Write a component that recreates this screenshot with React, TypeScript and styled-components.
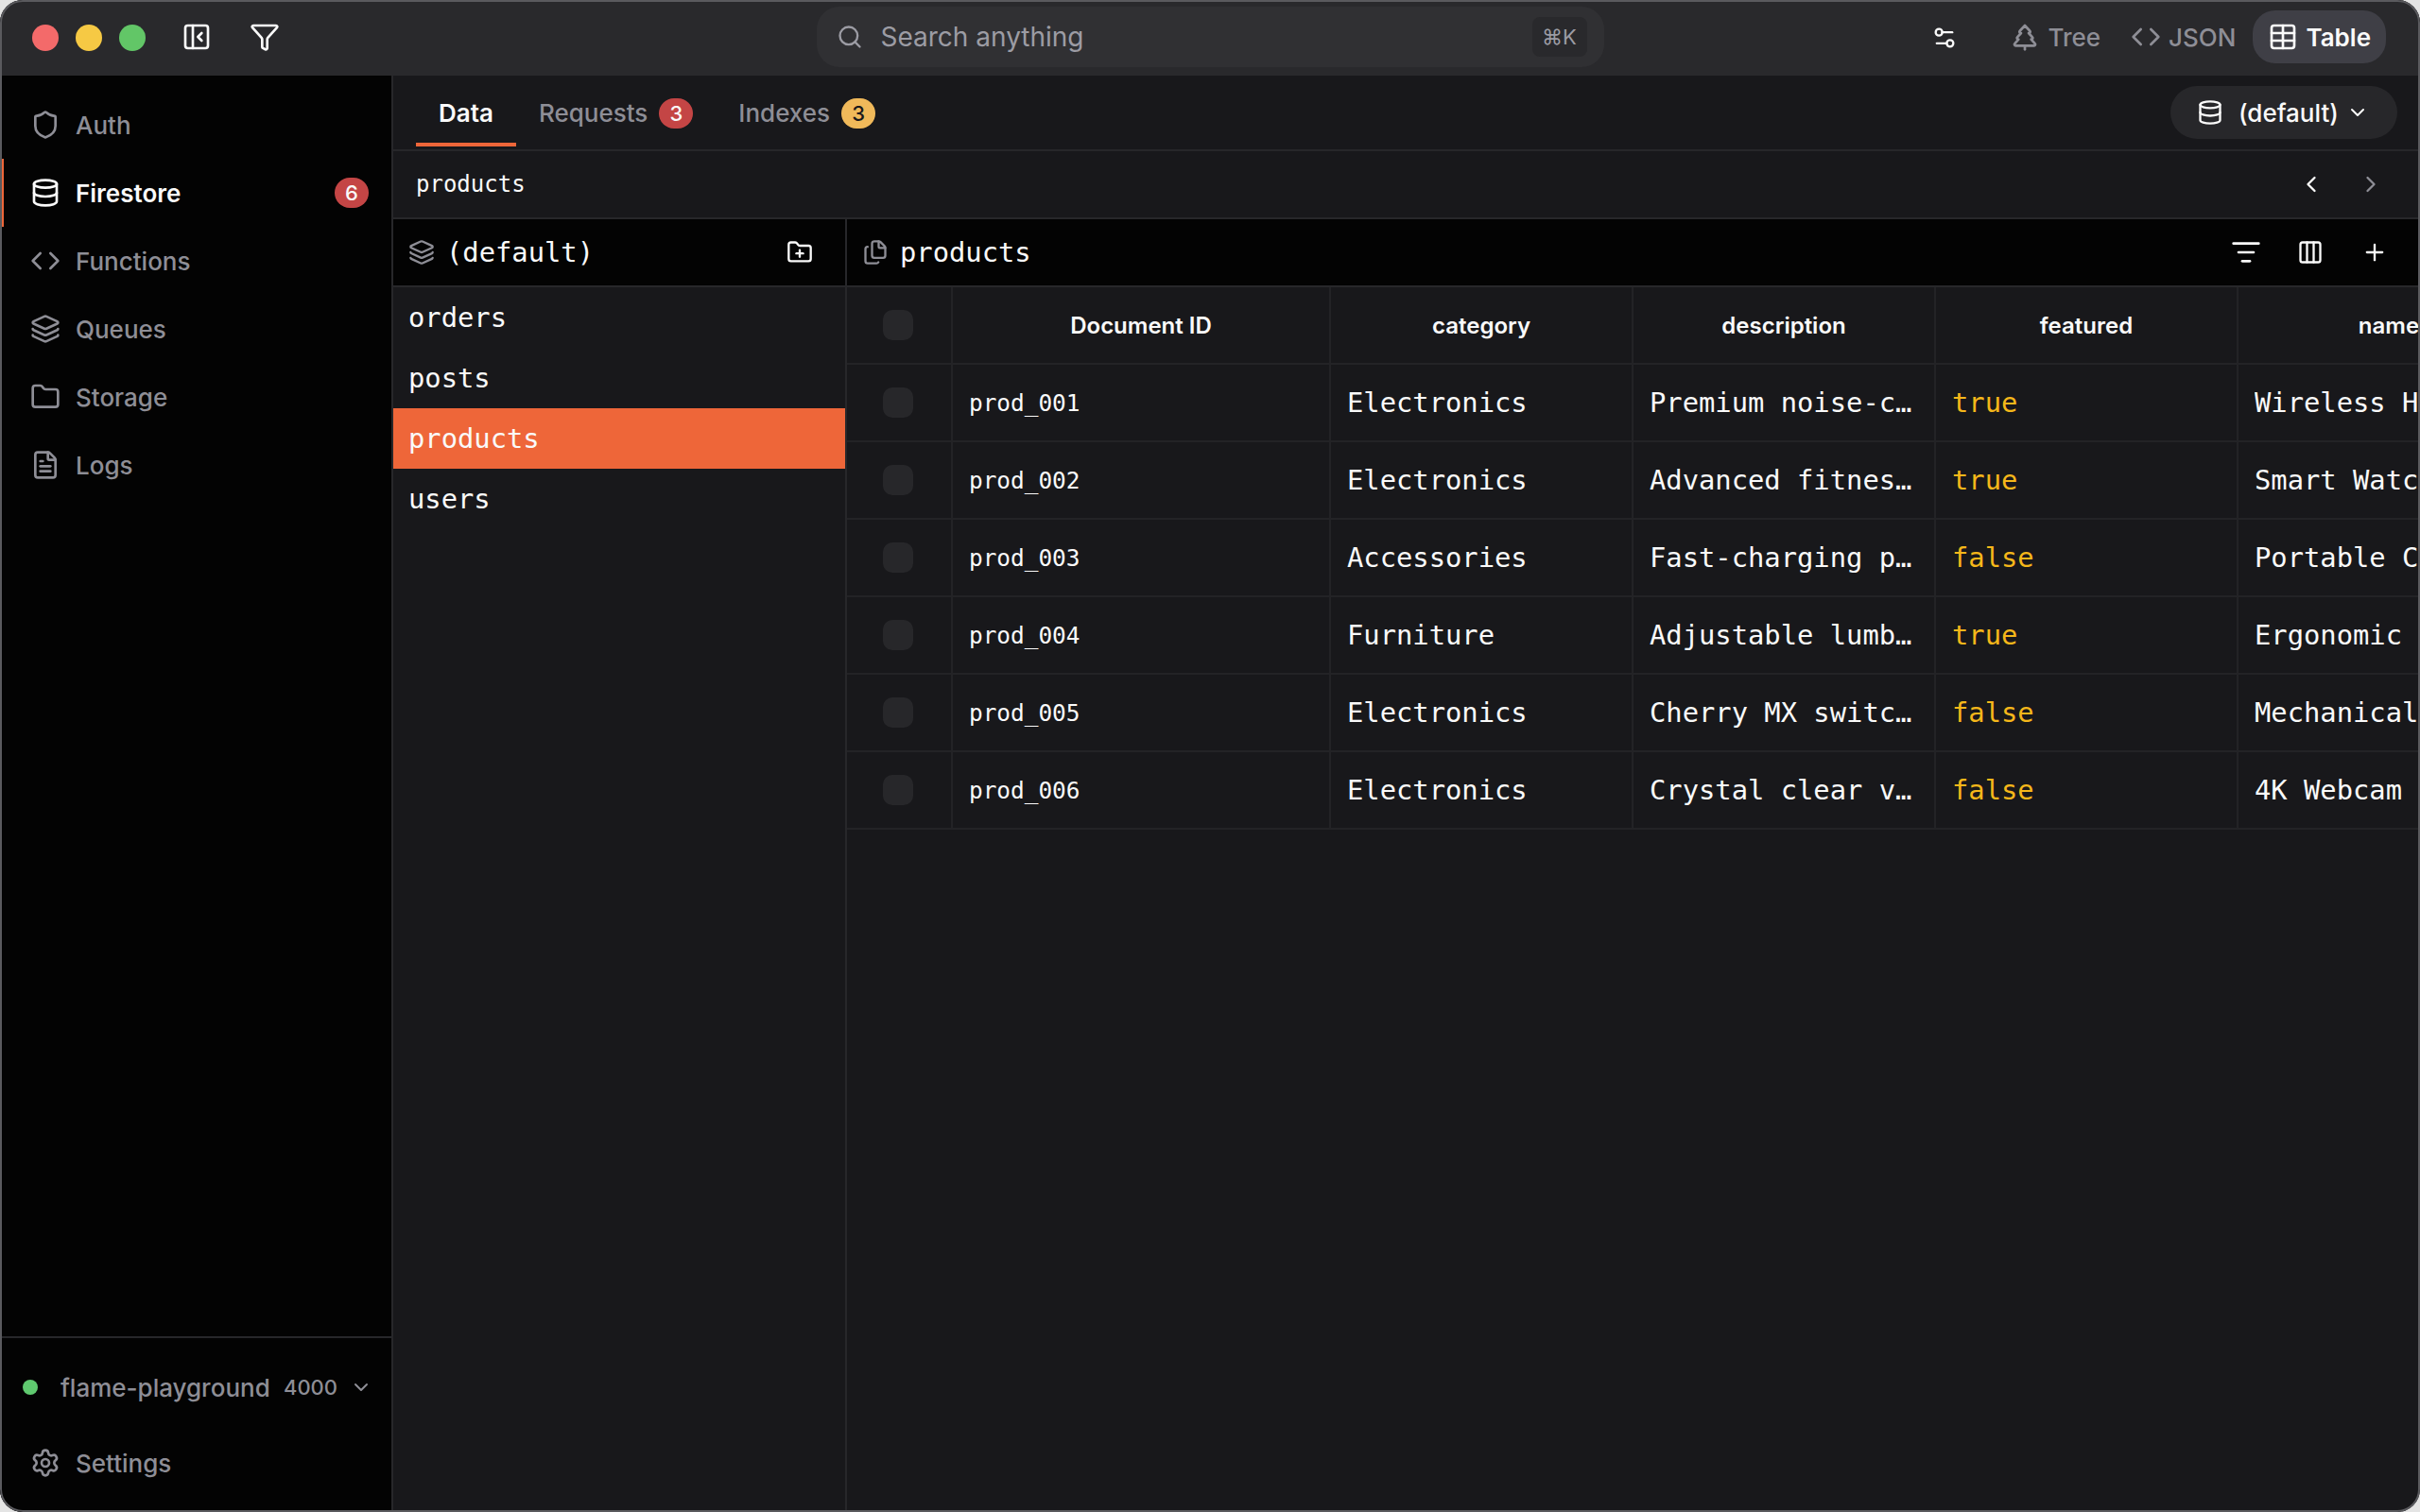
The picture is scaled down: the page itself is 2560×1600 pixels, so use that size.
import styled, { createGlobalStyle } from "styled-components";
import {
  ChevronDown,
  ChevronLeft,
  ChevronRight,
  Code,
  Columns3,
  Database,
  FileText,
  Files,
  Folder,
  FolderPlus,
  Funnel,
  Layers,
  ListFilter,
  PanelLeftClose,
  Plus,
  Search,
  Settings,
  Settings2,
  Shield,
  Table,
  TreePine,
} from "lucide-react";

const SANS = `Inter, "Liberation Sans", sans-serif`;
const MONO = `"DejaVu Sans Mono", "Liberation Mono", monospace`;
const ACCENT = "#ee6639";
const LINE = "#27272a";

const GlobalStyle = createGlobalStyle`
  html, body {
    margin: 0;
    padding: 0;
    background: #e4e4e4;
  }
  * {
    box-sizing: border-box;
  }
  svg {
    flex-shrink: 0;
    display: block;
  }
`;

const Window = styled.div`
  width: 2560px;
  height: 1600px;
  display: flex;
  flex-direction: column;
  overflow: hidden;
  border-radius: 24px;
  background: #18181b;
  font-family: ${SANS};
  color: #fafafa;
  position: relative;

  &::after {
    content: "";
    position: absolute;
    inset: 0;
    border: 2px solid #5a5a5e;
    border-radius: 24px;
    pointer-events: none;
  }
`;

const TitleBar = styled.header`
  height: 80px;
  flex-shrink: 0;
  display: grid;
  grid-template-columns: 1fr 833px 1fr;
  align-items: center;
  background: #29292c;
`;

const TitleLeft = styled.div`
  display: flex;
  align-items: center;
  padding-left: 34px;
  color: #fafafa;
`;

const Light = styled.span<{ $color: string }>`
  width: 28px;
  height: 28px;
  border-radius: 50%;
  margin-right: 18px;
  background: ${(p) => p.$color};
`;

const TitleIcons = styled.div`
  display: flex;
  gap: 40px;
  margin-left: 20px;
  margin-top: -2px;
`;

const SearchBox = styled.div`
  height: 64px;
  margin-top: -2px;
  display: flex;
  align-items: center;
  gap: 19px;
  padding: 0 18px 0 21px;
  border-radius: 24px;
  background: #303033;
  color: #9c9ca4;
`;

const SearchText = styled.span`
  flex: 1;
  font-size: 28px;
`;

const Kbd = styled.kbd`
  width: 58px;
  height: 42px;
  display: flex;
  align-items: center;
  justify-content: center;
  border-radius: 8px;
  background: #29292c;
  font-family: ${SANS};
  font-size: 22px;
  color: #9c9ca4;
`;

const TitleRight = styled.div`
  display: flex;
  align-items: center;
  justify-content: flex-end;
  padding-right: 36px;
  color: #fafafa;
`;

const SlidersSlot = styled.div`
  margin-right: 39px;
`;

const ViewButton = styled.div<{ $active?: boolean }>`
  height: 56px;
  display: flex;
  align-items: center;
  gap: 8px;
  padding: 0 16px;
  margin-top: -2px;
  border-radius: 24px;
  font-size: 26px;
  font-weight: ${(p) => (p.$active ? 600 : 500)};
  background: ${(p) => (p.$active ? "#3f3f46" : "transparent")};
  color: ${(p) => (p.$active ? "#fafafa" : "#8e8e96")};
  margin-left: ${(p) => (p.$active ? "2px" : "0")};
`;

const Body = styled.div`
  flex: 1;
  min-height: 0;
  display: flex;
`;

const Sidebar = styled.aside`
  width: 416px;
  flex-shrink: 0;
  display: flex;
  flex-direction: column;
  background: #030303;
  border-right: 2px solid ${LINE};
`;

const Nav = styled.nav`
  flex: 1;
  padding-top: 16px;
`;

const NavItem = styled.div<{ $active?: boolean }>`
  height: 72px;
  display: flex;
  align-items: center;
  gap: 16px;
  padding: 0 24px 0 32px;
  font-size: 26px;
  font-weight: ${(p) => (p.$active ? 600 : 500)};
  color: ${(p) => (p.$active ? "#fafafa" : "#8e8e96")};
  box-shadow: ${(p) => (p.$active ? `inset 4px 0 0 ${ACCENT}` : "none")};
`;

const NavLabel = styled.span`
  flex: 1;
`;

const Badge = styled.span<{ $tone?: "red" | "amber" }>`
  min-width: 36px;
  height: 32px;
  display: inline-flex;
  align-items: center;
  justify-content: center;
  border-radius: 16px;
  font-size: 22px;
  font-weight: 500;
  background: ${(p) => (p.$tone === "amber" ? "#f0b95a" : "#c44545")};
  color: ${(p) => (p.$tone === "amber" ? "#18181b" : "#fafafa")};
`;

const SidebarFooter = styled.div`
  border-top: 2px solid ${LINE};
  padding: 16px 0;
  display: flex;
  flex-direction: column;
  gap: 8px;
`;

const ServerRow = styled.div`
  height: 72px;
  display: flex;
  align-items: center;
  padding: 0 20px 0 24px;
  font-size: 26px;
  font-weight: 500;
  color: #8e8e96;
`;

const StatusDot = styled.span`
  width: 16px;
  height: 16px;
  border-radius: 50%;
  background: #5fc96f;
  margin-right: 24px;
`;

const ServerName = styled.span`
  flex: 1;
`;

const Port = styled.span`
  font-size: 22px;
  margin-right: 13px;
`;

const Main = styled.main`
  flex: 1;
  min-width: 0;
  display: flex;
  flex-direction: column;
`;

const TabBar = styled.div`
  height: 80px;
  flex-shrink: 0;
  display: flex;
  align-items: center;
  justify-content: space-between;
  padding: 0 24px;
  border-bottom: 2px solid ${LINE};
`;

const Tabs = styled.div`
  display: flex;
  align-self: stretch;
  padding: 4px 0 3px;
`;

const Tab = styled.div<{ $active?: boolean }>`
  position: relative;
  display: flex;
  align-items: center;
  gap: 12px;
  padding: 0 24px;
  font-size: 26px;
  font-weight: ${(p) => (p.$active ? 600 : 500)};
  color: ${(p) => (p.$active ? "#fafafa" : "#8e8e96")};

  &::after {
    content: "";
    display: ${(p) => (p.$active ? "block" : "none")};
    position: absolute;
    left: 0;
    right: 0;
    bottom: 0;
    height: 4px;
    background: ${ACCENT};
  }
`;

const DbSelect = styled.div`
  width: 240px;
  height: 56px;
  display: flex;
  align-items: center;
  padding: 0 30px 0 28px;
  border-radius: 28px;
  background: #27272a;
  font-size: 26px;
  font-weight: 500;
`;

const DbName = styled.span`
  flex: 1;
  margin-left: 16px;
`;

const Crumbs = styled.div`
  height: 72px;
  flex-shrink: 0;
  display: flex;
  align-items: center;
  justify-content: space-between;
  padding: 0 38px 0 24px;
  border-bottom: 2px solid ${LINE};
  font-family: ${MONO};
  font-size: 24px;
`;

const CrumbNav = styled.div`
  display: flex;
  gap: 35px;
`;

const Panels = styled.div`
  flex: 1;
  min-height: 0;
  display: flex;
`;

const Collections = styled.section`
  width: 480px;
  flex-shrink: 0;
  border-right: 2px solid ${LINE};
`;

const PanelHeader = styled.div`
  height: 72px;
  display: flex;
  align-items: center;
  padding: 0 34px 0 16px;
  background: #030303;
  border-bottom: 2px solid ${LINE};
  font-family: ${MONO};
  font-size: 28.8px;
`;

const PanelTitle = styled.span`
  flex: 1;
  margin-left: 12px;
`;

const DimIcon = styled.span`
  color: #8e8e96;
`;

const Collection = styled.div<{ $active?: boolean }>`
  height: 64px;
  display: flex;
  align-items: center;
  padding-left: 16px;
  font-family: ${MONO};
  font-size: 28.8px;
  background: ${(p) => (p.$active ? ACCENT : "transparent")};
`;

const Documents = styled.section`
  flex: 1;
  min-width: 0;
  overflow: hidden;
`;

const Tools = styled.div`
  display: flex;
  align-items: center;
  gap: 40px;
`;

const ToolSlot = styled.div`
  width: 28px;
  display: flex;
  justify-content: center;
`;

const Row = styled.div`
  height: 82px;
  display: grid;
  grid-template-columns: 112px 400px repeat(3, 320px) 320px;
  width: 1792px;
  border-bottom: 2px solid #232326;
`;

const Cell = styled.div<{ $yellow?: boolean; $small?: boolean }>`
  display: flex;
  align-items: center;
  min-width: 0;
  padding: 0 17px;
  border-right: 2px solid #232326;
  font-family: ${MONO};
  font-size: ${(p) => (p.$small ? "24.4px" : "28.8px")};
  color: ${(p) => (p.$yellow ? "#f5b71a" : "#fafafa")};
`;

const Clip = styled.span`
  overflow: hidden;
  white-space: nowrap;
  text-overflow: ellipsis;
`;

const HeadCell = styled.div`
  display: flex;
  align-items: center;
  justify-content: center;
  min-width: 0;
  border-right: 2px solid #232326;
  font-size: 24px;
  font-weight: 600;
`;

const CheckCell = styled.div`
  display: flex;
  align-items: center;
  justify-content: center;
  padding-right: 2px;
  border-right: 2px solid #232326;
`;

const CheckBox = styled.span`
  width: 32px;
  height: 32px;
  border-radius: 10px;
  background: #27272a;
`;

const navItems = [
  { label: "Auth", Icon: Shield },
  { label: "Firestore", Icon: Database, active: true, badge: "6" },
  { label: "Functions", Icon: Code },
  { label: "Queues", Icon: Layers },
  { label: "Storage", Icon: Folder },
  { label: "Logs", Icon: FileText },
];

const columns = ["Document ID", "category", "description", "featured", "name"];

const products = [
  ["prod_001", "Electronics", "Premium noise-cancelling headphones", "true", "Wireless Headphones"],
  ["prod_002", "Electronics", "Advanced fitness tracking watch", "true", "Smart Watch Pro"],
  ["prod_003", "Accessories", "Fast-charging portable battery", "false", "Portable Charger"],
  ["prod_004", "Furniture", "Adjustable lumbar support chair", "true", "Ergonomic Chair"],
  ["prod_005", "Electronics", "Cherry MX switches keyboard", "false", "Mechanical Keyboard"],
  ["prod_006", "Electronics", "Crystal clear video calls", "false", "4K Webcam Pro"],
];

export default function App() {
  return (
    <>
      <GlobalStyle />
      <Window>
        <TitleBar>
          <TitleLeft>
            <Light $color="#f36a6a" />
            <Light $color="#f6c944" />
            <Light $color="#62c667" />
            <TitleIcons>
              <PanelLeftClose size={32} />
              <Funnel size={32} />
            </TitleIcons>
          </TitleLeft>
          <SearchBox>
            <Search size={28} />
            <SearchText>Search anything</SearchText>
            <Kbd>⌘K</Kbd>
          </SearchBox>
          <TitleRight>
            <SlidersSlot>
              <Settings2 size={28} />
            </SlidersSlot>
            <ViewButton>
              <TreePine size={32} />
              Tree
            </ViewButton>
            <ViewButton>
              <Code size={32} />
              JSON
            </ViewButton>
            <ViewButton $active>
              <Table size={32} />
              Table
            </ViewButton>
          </TitleRight>
        </TitleBar>
        <Body>
          <Sidebar>
            <Nav>
              {navItems.map(({ label, Icon, active, badge }) => (
                <NavItem key={label} $active={active}>
                  <Icon size={32} />
                  <NavLabel>{label}</NavLabel>
                  {badge && <Badge>{badge}</Badge>}
                </NavItem>
              ))}
            </Nav>
            <SidebarFooter>
              <ServerRow>
                <StatusDot />
                <ServerName>flame-playground</ServerName>
                <Port>4000</Port>
                <ChevronDown size={24} />
              </ServerRow>
              <NavItem>
                <Settings size={32} />
                <NavLabel>Settings</NavLabel>
              </NavItem>
            </SidebarFooter>
          </Sidebar>
          <Main>
            <TabBar>
              <Tabs>
                <Tab $active>Data</Tab>
                <Tab>
                  Requests <Badge>3</Badge>
                </Tab>
                <Tab>
                  Indexes <Badge $tone="amber">3</Badge>
                </Tab>
              </Tabs>
              <DbSelect>
                <Database size={28} />
                <DbName>(default)</DbName>
                <ChevronDown size={24} />
              </DbSelect>
            </TabBar>
            <Crumbs>
              products
              <CrumbNav>
                <ChevronLeft size={28} />
                <DimIcon>
                  <ChevronRight size={28} />
                </DimIcon>
              </CrumbNav>
            </Crumbs>
            <Panels>
              <Collections>
                <PanelHeader>
                  <DimIcon>
                    <Layers size={28} />
                  </DimIcon>
                  <PanelTitle>(default)</PanelTitle>
                  <FolderPlus size={28} />
                </PanelHeader>
                <Collection>orders</Collection>
                <Collection>posts</Collection>
                <Collection $active>products</Collection>
                <Collection>users</Collection>
              </Collections>
              <Documents>
                <PanelHeader>
                  <DimIcon>
                    <Files size={28} />
                  </DimIcon>
                  <PanelTitle>products</PanelTitle>
                  <Tools>
                    <ToolSlot>
                      <ListFilter size={32} />
                    </ToolSlot>
                    <ToolSlot>
                      <Columns3 size={28} />
                    </ToolSlot>
                    <ToolSlot>
                      <Plus size={28} />
                    </ToolSlot>
                  </Tools>
                </PanelHeader>
                <Row>
                  <CheckCell>
                    <CheckBox />
                  </CheckCell>
                  {columns.map((c) => (
                    <HeadCell key={c}>{c}</HeadCell>
                  ))}
                </Row>
                {products.map(([id, category, description, featured, name]) => (
                  <Row key={id}>
                    <CheckCell>
                      <CheckBox />
                    </CheckCell>
                    <Cell $small>
                      <Clip>{id}</Clip>
                    </Cell>
                    <Cell>
                      <Clip>{category}</Clip>
                    </Cell>
                    <Cell>
                      <Clip>{description}</Clip>
                    </Cell>
                    <Cell $yellow>
                      <Clip>{featured}</Clip>
                    </Cell>
                    <Cell>
                      <Clip>{name}</Clip>
                    </Cell>
                  </Row>
                ))}
              </Documents>
            </Panels>
          </Main>
        </Body>
      </Window>
    </>
  );
}
